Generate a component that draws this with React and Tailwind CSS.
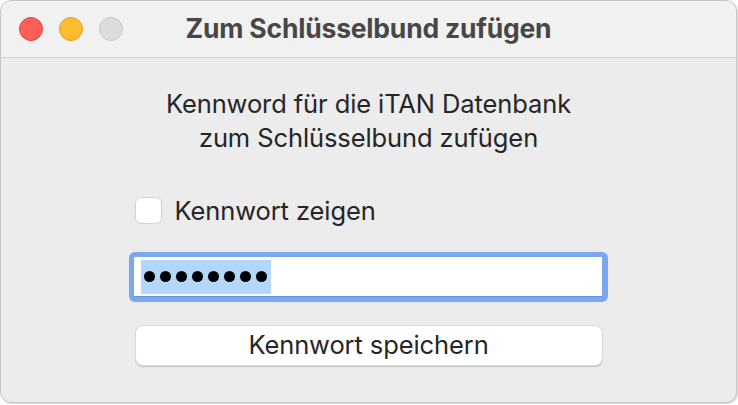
import React from 'react';

function TrafficLights() {
  return (
    <div className="flex items-center gap-4 pl-[18px]">
      <span className="h-6 w-6 rounded-full border border-[#e0443e] bg-[#fe5f57]" />
      <span className="h-6 w-6 rounded-full border border-[#dea123] bg-[#febc2e]" />
      <span className="h-6 w-6 rounded-full border border-[#c8c8c8] bg-[#dcdcdc]" />
    </div>
  );
}

function PasswordField() {
  return (
    <div className="h-[50px] w-[479px] rounded-[6px] bg-[#7aa8ef] p-[5px] pr-[6px]">
      <div className="flex h-full w-full items-center border-b border-[#5f90e4] bg-white pl-[7px]">
        <div className="flex h-[34px] w-[130px] items-center gap-[5px] bg-[#b3d7ff] pl-[3px]">
          {Array.from({ length: 8 }).map((_, i) => (
            <span key={i} className="h-[11px] w-[11px] rounded-full bg-black" />
          ))}
        </div>
      </div>
    </div>
  );
}

export default function App() {
  return (
    <div className="h-[405px] w-[738px] bg-white font-['Inter','Liberation_Sans',sans-serif]">
      <div className="flex h-[403px] w-[737px] flex-col overflow-hidden rounded-[11px] border border-[#c6c6c6] bg-[#ececec] shadow-[1px_1px_1px_rgba(0,0,0,0.15)]">
        <header className="relative flex h-[57px] shrink-0 items-center border-b border-[#d3d3d3] bg-[#f1f1f1]">
          <TrafficLights />
          <h1 className="absolute inset-x-0 text-center text-[26.5px] font-bold tracking-[-0.2px] text-[#474747]">
            Zum Schlüsselbund zufügen
          </h1>
        </header>

        <main className="flex flex-col items-center pt-[29px]">
          <p className="text-center text-[25.5px] leading-[34px] tracking-[-0.1px] text-[#262626]">
            Kennword für die iTAN Datenbank
            <br />
            zum Schlüsselbund zufügen
          </p>

          <label className="mt-[42px] flex w-[470px] items-center gap-[13px] pl-[1px]">
            <span className="h-[27px] w-[27px] rounded-[6px] border border-[#d2d2d2] bg-white" />
            <span className="text-[25.5px] leading-[27px] tracking-[-0.1px] text-[#262626]">Kennwort zeigen</span>
          </label>

          <div className="mt-[28px]">
            <PasswordField />
          </div>

          <button className="mt-[23px] h-[41px] w-[468px] rounded-[8px] border border-[#d9d9d9] bg-white text-[25.5px] tracking-[-0.1px] text-[#262626] shadow-[0_1px_1px_rgba(0,0,0,0.18)]">
            Kennwort speichern
          </button>
        </main>
      </div>
    </div>
  );
}
